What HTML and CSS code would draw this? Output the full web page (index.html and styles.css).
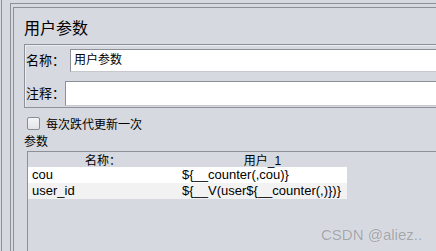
FILE: index.html
```html
<!DOCTYPE html>
<html>
	<head>
		<meta charset="utf-8">
		<title>用户参数</title>
		<link rel="stylesheet" href="styles.css">
	</head>
	<body>
		<div class="window">
			<div class="outer">
				<div class="panel">
					<h1 class="title">用户参数</h1>

					<div class="fields">
						<div class="field name-row">
							<span class="label">名称：</span>
							<div class="input">用户参数</div>
						</div>
						<div class="field comment-row">
							<span class="label">注释：</span>
							<div class="input"></div>
						</div>
					</div>

					<div class="check"><span class="check-box"></span>每次跌代更新一次</div>
					<div class="section-label">参数</div>

					<div class="table">
						<div class="row head">
							<div class="c1">名称：</div>
							<div class="c2">用户_1</div>
						</div>
						<div class="row">
							<div class="c1">cou</div>
							<div class="c2">${__counter(,cou)}</div>
						</div>
						<div class="row alt">
							<div class="c1">user_id</div>
							<div class="c2">${__V(user${__counter(,)})}</div>
						</div>
					</div>
				</div>
			</div>
			<div class="watermark">CSDN @aliez..</div>
		</div>
	</body>
</html>
```
FILE: styles.css
```css
* {
	box-sizing: border-box;
}
html, body {
	margin: 0;
	padding: 0;
	background: #d6d9df;
	overflow: hidden;
}
body {
	font-family: "Liberation Sans", "Noto Sans CJK SC", sans-serif;
	font-size: 12px;
	color: #000;
}
.window {
	position: relative;
	margin-left: 1px;
	height: 251px;
	padding: 3px 0 0 8px;
	border-left: 1px solid #8e9098;
}
.outer {
	height: 100%;
	padding: 3px 0 0 2px;
	border-left: 1px solid #8e9098;
	border-top: 1px solid #8e9098;
}
.panel {
	display: flex;
	flex-direction: column;
	height: 100%;
	padding: 11px 0 0 10px;
	border-left: 1px solid #8e9098;
	border-top: 1px solid #8e9098;
}
.title {
	margin: 0;
	font-size: 16px;
	font-weight: normal;
	line-height: 20px;
}

/* 名称 / 注释 */
.fields {
	margin-top: 5px;
	padding: 4px 0 1px 1px;
	border: 1px solid #8e9098;
	border-right: 0;
	box-shadow: inset 1px 1px 0 #eceef2;
}
.field {
	display: flex;
	align-items: center;
}
.name-row {
	height: 23px;
}
.comment-row {
	height: 25px;
	margin-top: 9px;
}
.label {
	font-size: 13px;
	line-height: 16px;
}
.name-row .label {
	width: 44px;
}
.comment-row .label {
	width: 39px;
}
.input {
	flex: 1;
	height: 100%;
	padding-left: 3px;
	background: #fff;
	border-top: 1px solid #8e9098;
	border-left: 1px solid #8e9098;
	border-bottom: 1px solid #c6c8ce;
	font-size: 12px;
	line-height: 21px;
}

.check {
	display: flex;
	align-items: center;
	margin: 9px 0 0 3px;
	height: 13px;
	font-size: 12px;
}
.check-box {
	width: 13px;
	height: 13px;
	margin-right: 6px;
	border: 1px solid #8a8d94;
	border-radius: 2px;
	background: linear-gradient(#f4f5f7, #e2e4e9);
}
.section-label {
	margin-top: 5px;
	line-height: 14px;
	font-size: 12px;
}

/* 参数表 */
.table {
	flex: 1;
	margin: 2px 0 0 3px;
	border-top: 1px solid #8e9098;
	border-left: 1px solid #8e9098;
}
.row {
	display: flex;
	width: 319px;
	height: 16px;
	line-height: 16px;
	background: #fff;
	font-size: 13px;
}
.row.alt {
	background: #f2f2f2;
}
.row.head {
	height: 15px;
	line-height: 18px;
	background: transparent;
	font-size: 12px;
}
.c1 {
	width: 150px;
	padding-left: 4px;
}
.c2 {
	flex: 1;
	padding-left: 4px;
}
.head .c1, .head .c2 {
	text-align: center;
	padding-left: 0;
}

.watermark {
	position: absolute;
	left: 319px;
	top: 226px;
	font-size: 15px;
	line-height: 18px;
	color: #a3a5ab;
	text-shadow: 0 0 1px #f2f3f5;
}
```
